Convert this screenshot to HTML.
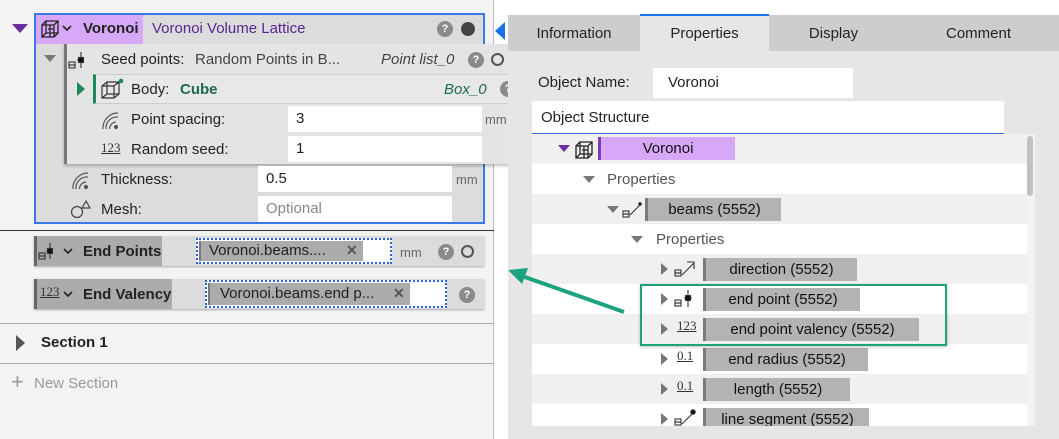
<!DOCTYPE html>
<html><head><meta charset="utf-8"><style>
*{box-sizing:border-box;margin:0;padding:0}
body{width:1059px;height:439px;overflow:hidden;background:#fff;font-family:"Liberation Sans",Arial,sans-serif;font-size:14px;color:#222;position:relative}
.a{position:absolute}
.q{position:absolute;width:16px;height:16px;border-radius:50%;background:#8a8a8a;color:#fff;font-size:11px;font-weight:bold;text-align:center;line-height:16px}
.o{position:absolute;width:13px;height:13px;border-radius:50%;border:2px solid #555}
.inp{position:absolute;background:#fff;height:26px;line-height:26px;padding-left:8px;font-size:15px}
.row{position:absolute;left:532px;width:495px;height:30px}
.chip{position:absolute;background:#b3b3b3;border-left:3px solid #7a7a7a;height:23px;line-height:23px;text-align:center;font-size:15px;color:#111}
.tri{position:absolute;width:0;height:0;border-top:6px solid transparent;border-bottom:6px solid transparent;border-left:7px solid #777}
.trd{position:absolute;width:0;height:0;border-left:6px solid transparent;border-right:6px solid transparent;border-top:7px solid #777}
</style></head><body>
<div class="a" style="left:0;top:0;width:494px;height:439px;background:#f3f3f3;border-right:1px solid #bbb"></div>
<div class="a" style="left:12px;top:24px;width:0;height:0;border-left:8px solid transparent;border-right:8px solid transparent;border-top:9px solid #6a2ea0"></div>
<div class="a" style="left:34px;top:13px;width:451px;height:211px;border:2px solid #3b78e7;background:#dcdcdc"></div>
<div class="a" style="left:36px;top:15px;width:107px;height:29px;background:#d7a8f7"></div>
<svg class="a" style="left:39px;top:18px" width="22" height="22" viewBox="0 0 22 22" fill="none" stroke="#222" stroke-width="1.3"><path d="M3 7h12v12H3zM7 3h12v12H7zM3 7l4-4M15 7l4-4M15 19l4-4M3 19l4-4M9 11h6M11 7v12"/></svg>
<svg class="a" style="left:62px;top:25px" width="10" height="7"><path d="M1 1l4 4 4-4" stroke="#222" stroke-width="1.6" fill="none"/></svg>
<div class="a" style="left:83px;top:20px;font-weight:bold;font-size:15px">Voronoi</div>
<div class="a" style="left:152px;top:20px;font-size:15px;color:#5b2590">Voronoi Volume Lattice</div>
<div class="q" style="left:437px;top:21px">?</div>
<div class="a" style="left:461px;top:22px;width:14px;height:14px;border-radius:50%;background:#444"></div>
<div class="a" style="left:495px;top:22px;width:0;height:0;border-top:9px solid transparent;border-bottom:9px solid transparent;border-right:10px solid #1a73e8"></div>
<div class="a" style="left:64px;top:44px;width:446px;height:120px;background:#e4e4e4;border-left:3px solid #777;box-shadow:0 2px 3px rgba(0,0,0,.25)"></div>
<div class="trd" style="left:44px;top:55px"></div>
<svg class="a" style="left:68px;top:51px" width="20" height="20" fill="none" stroke="#333" stroke-width="1.1"><rect x="1" y="11" width="6" height="3"/><rect x="1" y="14" width="6" height="3"/><path d="M13 1v16M9 9h7"/><rect x="10.5" y="6.5" width="5" height="5" fill="#111"/></svg>
<div class="a" style="left:101px;top:51px;font-size:15px">Seed points:</div>
<div class="a" style="left:195px;top:51px;font-size:15px;color:#444">Random Points in B...</div>
<div class="a" style="left:381px;top:51px;font-size:15px;font-style:italic;color:#444">Point list_0</div>
<div class="q" style="left:468px;top:52px">?</div>
<div class="o" style="left:491px;top:53px"></div>
<div class="a" style="left:93px;top:74px;width:417px;height:30px;background:#e8e8e8;border:1px solid #ccc;border-left:3px solid #1e8a5a"></div>
<div class="a" style="left:77px;top:82px;width:0;height:0;border-top:7px solid transparent;border-bottom:7px solid transparent;border-left:8px solid #1e8a5a"></div>
<svg class="a" style="left:100px;top:78px" width="24" height="22" fill="none" stroke="#333" stroke-width="1.2"><path d="M2 8h12v12H2zM7 4h12v12H7zM2 8l5-4M14 8l5-4M14 20l5-4M2 20l5-4"/><circle cx="21" cy="3" r="2.3" fill="#1e8a5a" stroke="none"/></svg>
<div class="a" style="left:131px;top:81px;font-size:15px">Body:</div>
<div class="a" style="left:180px;top:81px;font-size:15px;color:#1c6b4a;font-weight:bold">Cube</div>
<div class="a" style="left:444px;top:81px;font-size:15px;font-style:italic;color:#1c6b4a">Box_0</div>
<div class="q" style="left:500px;top:81px">?</div>
<svg class="a" style="left:101px;top:110px" width="20" height="20" fill="none" stroke="#555" stroke-width="1.2"><path d="M2 19A15 15 0 0 1 17 3M5 19A11 11 0 0 1 17 7M8.5 19A7 7 0 0 1 15 12"/><circle cx="15" cy="17" r="1.5" fill="#555"/></svg>
<div class="a" style="left:131px;top:111px;font-size:15px">Point spacing:</div>
<div class="inp" style="left:288px;top:106px;width:194px">3</div>
<div class="a" style="left:485px;top:112px;font-size:13px;color:#666">mm</div>
<div class="a" style="left:101px;top:140px;font-size:13px;font-family:'Liberation Serif',serif;text-decoration:underline;color:#333">123</div>
<div class="a" style="left:131px;top:141px;font-size:15px">Random seed:</div>
<div class="inp" style="left:288px;top:136px;width:194px">1</div>
<svg class="a" style="left:71px;top:170px" width="20" height="20" fill="none" stroke="#555" stroke-width="1.2"><path d="M2 19A15 15 0 0 1 17 3M5 19A11 11 0 0 1 17 7M8.5 19A7 7 0 0 1 15 12"/><circle cx="15" cy="17" r="1.5" fill="#555"/></svg>
<div class="a" style="left:101px;top:171px;font-size:15px">Thickness:</div>
<div class="inp" style="left:258px;top:166px;width:194px">0.5</div>
<div class="a" style="left:456px;top:172px;font-size:13px;color:#666">mm</div>
<svg class="a" style="left:70px;top:199px" width="22" height="20" fill="none" stroke="#444" stroke-width="1.2"><circle cx="7" cy="13" r="5.5"/><path d="M12 9l4-7 4 7z"/></svg>
<div class="a" style="left:101px;top:201px;font-size:15px">Mesh:</div>
<div class="inp" style="left:258px;top:196px;width:194px;color:#888">Optional</div>
<div class="a" style="left:0;top:230px;width:494px;height:1px;background:#333"></div>
<div class="a" style="left:34px;top:236px;width:450px;height:30px;background:#dcdcdc;box-shadow:0 1px 2px rgba(0,0,0,.3)"></div>
<div class="a" style="left:34px;top:236px;width:128px;height:30px;background:#ababab;border-left:3px solid #666"></div>
<svg class="a" style="left:38px;top:241px" width="20" height="22" fill="none" stroke="#333" stroke-width="1.1"><rect x="1" y="12" width="6" height="3"/><rect x="1" y="15" width="6" height="3"/><path d="M12 2v16M8 10h7"/><rect x="9.5" y="7.5" width="5" height="5" fill="#111"/></svg>
<svg class="a" style="left:63px;top:248px" width="10" height="7"><path d="M1 1l4 4 4-4" stroke="#222" stroke-width="1.6" fill="none"/></svg>
<div class="a" style="left:83px;top:243px;font-weight:bold;font-size:15px">End Points</div>
<div class="a" style="left:196px;top:238px;width:196px;height:26px;border:2px dotted #2b62d9;background:#fff"></div>
<div class="a" style="left:199px;top:241px;width:164px;height:20px;background:#ababab;border-left:2px solid #777;font-size:15px;line-height:20px;padding-left:8px">Voronoi.beams....</div>
<div class="a" style="left:346px;top:242px;font-weight:bold;color:#555">✕</div>
<div class="a" style="left:400px;top:245px;font-size:13px;color:#666">mm</div>
<div class="q" style="left:438px;top:244px">?</div>
<div class="o" style="left:461px;top:245px"></div>
<div class="a" style="left:34px;top:279px;width:450px;height:30px;background:#dcdcdc;box-shadow:0 1px 2px rgba(0,0,0,.3)"></div>
<div class="a" style="left:34px;top:279px;width:138px;height:30px;background:#ababab;border-left:3px solid #666"></div>
<div class="a" style="left:40px;top:284px;font-size:13px;font-family:'Liberation Serif',serif;text-decoration:underline;color:#333">123</div>
<svg class="a" style="left:63px;top:291px" width="10" height="7"><path d="M1 1l4 4 4-4" stroke="#222" stroke-width="1.6" fill="none"/></svg>
<div class="a" style="left:83px;top:286px;font-weight:bold;font-size:15px">End Valency</div>
<div class="a" style="left:205px;top:280px;width:242px;height:28px;border:2px dotted #2b62d9;background:#fff"></div>
<div class="a" style="left:208px;top:283px;width:202px;height:22px;background:#ababab;border-left:2px solid #777;font-size:15px;line-height:22px;padding-left:10px">Voronoi.beams.end p...</div>
<div class="a" style="left:393px;top:285px;font-weight:bold;color:#555">✕</div>
<div class="q" style="left:459px;top:287px">?</div>
<div class="a" style="left:0;top:323px;width:494px;height:1px;background:#aaa"></div>
<div class="a" style="left:16px;top:335px;width:0;height:0;border-top:8px solid transparent;border-bottom:8px solid transparent;border-left:9px solid #555"></div>
<div class="a" style="left:41px;top:334px;font-weight:bold;font-size:15px">Section 1</div>
<div class="a" style="left:0;top:363px;width:494px;height:1px;background:#aaa"></div>
<div class="a" style="left:11px;top:371px;font-size:22px;color:#999;line-height:22px">+</div>
<div class="a" style="left:34px;top:375px;font-size:15px;color:#999">New Section</div>
<div class="a" style="left:508px;top:15px;width:551px;height:424px;background:#e6e6e6"></div>
<div class="a" style="left:508px;top:15px;width:132px;height:36px;background:#cdcdcd;text-align:center;line-height:38px;font-size:15px">Information</div>
<div class="a" style="left:640px;top:14px;width:129px;height:37px;background:#e6e6e6;border-top:2px solid #1a73e8;text-align:center;line-height:36px;font-size:15px">Properties</div>
<div class="a" style="left:769px;top:15px;width:129px;height:36px;background:#cdcdcd;text-align:center;line-height:38px;font-size:15px">Display</div>
<div class="a" style="left:898px;top:15px;width:161px;height:36px;background:#cdcdcd;text-align:center;line-height:38px;font-size:15px">Comment</div>
<div class="a" style="left:538px;top:74px;font-size:15px">Object Name:</div>
<div class="inp" style="left:653px;top:68px;width:200px;height:30px;line-height:30px;padding-left:15px">Voronoi</div>
<div class="a" style="left:532px;top:101px;width:472px;height:33px;background:#fff;border-bottom:1px solid #3b6fd9;font-size:15px;padding:8px 0 0 9px">Object Structure</div>
<div class="a" style="left:532px;top:134px;width:495px;height:292px;background:#fff"></div>
<div class="row" style="top:134px;background:#f0f0f0"></div>
<div class="row" style="top:194px;background:#f0f0f0"></div>
<div class="row" style="top:254px;background:#f0f0f0"></div>
<div class="row" style="top:314px;background:#f0f0f0"></div>
<div class="row" style="top:374px;background:#f0f0f0"></div>
<div class="a" style="left:1027px;top:134px;width:8px;height:292px;background:#f3f3f3"></div>
<div class="a" style="left:1027px;top:136px;width:6px;height:60px;background:#c2c2c2;border-radius:3px"></div>
<div class="a" style="left:558px;top:145px;width:0;height:0;border-left:6px solid transparent;border-right:6px solid transparent;border-top:7px solid #6a2ea0"></div>
<svg class="a" style="left:573px;top:139px" width="22" height="22" fill="none" stroke="#222" stroke-width="1.3"><path d="M3 7h12v12H3zM7 3h12v12H7zM3 7l4-4M15 7l4-4M15 19l4-4M3 19l4-4M9 11h6M11 7v12"/></svg>
<div class="chip" style="left:598px;top:137px;width:137px;background:#d7a8f7;border-left-color:#7a3cb0">Voronoi</div>
<div class="trd" style="left:583px;top:176px"></div>
<div class="a" style="left:607px;top:171px;font-size:15px;color:#555">Properties</div>
<div class="trd" style="left:607px;top:206px"></div>
<svg class="a" style="left:621px;top:199px" width="22" height="22" fill="none" stroke="#333" stroke-width="1.1"><rect x="2" y="12" width="6" height="3"/><rect x="2" y="15" width="6" height="3"/><path d="M9 16l10-10"/><circle cx="19" cy="5" r="1.3" fill="#333"/></svg>
<div class="chip" style="left:645px;top:198px;width:136px">beams (5552)</div>
<div class="trd" style="left:631px;top:236px"></div>
<div class="a" style="left:656px;top:231px;font-size:15px;color:#555">Properties</div>
<div class="tri" style="left:661px;top:263px"></div>
<svg class="a" style="left:673px;top:258px" width="24" height="22" fill="none" stroke="#333" stroke-width="1.1"><rect x="2" y="12" width="6" height="3"/><rect x="2" y="15" width="6" height="3"/><path d="M9 17l12-12M14 4h7v7"/></svg>
<div class="chip" style="left:703px;top:258px;width:154px">direction (5552)</div>
<div class="tri" style="left:661px;top:293px"></div>
<svg class="a" style="left:673px;top:288px" width="24" height="22" fill="none" stroke="#333" stroke-width="1.1"><rect x="2" y="12" width="6" height="3"/><rect x="2" y="15" width="6" height="3"/><path d="M15 2v17M11 10h8"/><rect x="12.5" y="7.5" width="5" height="5" fill="#111"/></svg>
<div class="chip" style="left:703px;top:288px;width:157px">end point (5552)</div>
<div class="tri" style="left:661px;top:323px"></div>
<div class="a" style="left:677px;top:318px;font-size:13px;font-family:'Liberation Serif',serif;text-decoration:underline;color:#333">123</div>
<div class="chip" style="left:703px;top:318px;width:216px">end point valency (5552)</div>
<div class="tri" style="left:661px;top:353px"></div>
<div class="a" style="left:677px;top:348px;font-size:13px;font-family:'Liberation Serif',serif;text-decoration:underline;color:#333">0.1</div>
<div class="chip" style="left:703px;top:348px;width:165px">end radius (5552)</div>
<div class="tri" style="left:661px;top:383px"></div>
<div class="a" style="left:677px;top:378px;font-size:13px;font-family:'Liberation Serif',serif;text-decoration:underline;color:#333">0.1</div>
<div class="chip" style="left:703px;top:378px;width:147px">length (5552)</div>
<div class="tri" style="left:661px;top:413px"></div>
<svg class="a" style="left:673px;top:407px" width="24" height="20" fill="none" stroke="#333" stroke-width="1.1"><rect x="2" y="12" width="6" height="3"/><rect x="2" y="15" width="6" height="3"/><path d="M9 17l11-11"/><circle cx="20" cy="5" r="2.2" fill="#111"/></svg>
<div class="a" style="left:703px;top:408px;width:166px;height:18px;overflow:hidden"><div class="chip" style="left:0;top:0;width:166px">line segment (5552)</div></div>
<div class="a" style="left:640px;top:284px;width:307px;height:62px;border:2px solid #1aa37e;box-shadow:0 1px 3px rgba(0,0,0,.25)"></div>
<svg class="a" style="left:500px;top:260px" width="130" height="60"><path d="M124 52L22 16" stroke="#1aa37e" stroke-width="4"/><path d="M8 10l20-2-6 16z" fill="#1aa37e"/></svg>
</body></html>
